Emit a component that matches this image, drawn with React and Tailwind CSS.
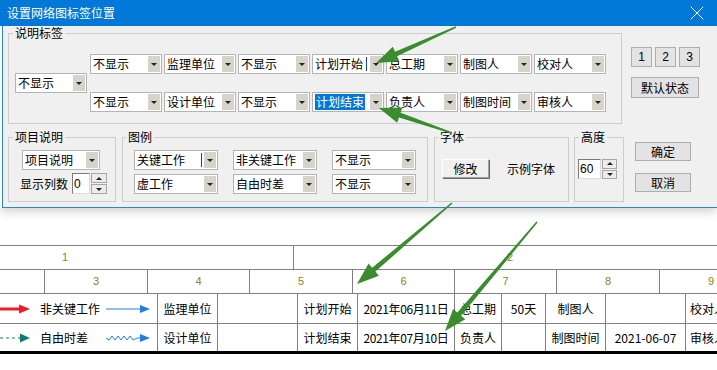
import { X } from "lucide-react";

function Tri({ up }) {
  return up ? (
    <div className="border-x-[3px] border-x-transparent border-b-[3px] border-b-[#222]" />
  ) : (
    <div className="border-x-[3px] border-x-transparent border-t-[3px] border-t-[#222]" />
  );
}

function Combo({ text, w, sel, caret }) {
  return (
    <div className={`${w} h-[20px] flex border border-[#b4b4b4] bg-white`}>
      <div className="flex-1 flex items-center pl-[2px] overflow-hidden whitespace-nowrap">
        {sel ? (
          <span className="bg-[#0078d7] text-white px-[1px] leading-[16px]">{text}</span>
        ) : (
          <span>{text}</span>
        )}
        {caret && <span className={`${caret} w-px h-[14px] bg-[#1d3f8f]`} />}
      </div>
      <div className="w-[12px] my-[1px] mr-[1px] bg-[#d6d3cb] flex items-center justify-center">
        <Tri />
      </div>
    </div>
  );
}

function Btn({ children, className }) {
  return (
    <div className={`${className} flex items-center justify-center bg-[#e3e3e3] border border-[#adadad]`}>
      {children}
    </div>
  );
}

function Spin({ w }) {
  return (
    <div className={`${w} h-full flex flex-col gap-px`}>
      <div className="flex-1 bg-[#ececec] border border-[#a6a6a6] flex items-center justify-center">
        <Tri up />
      </div>
      <div className="flex-1 bg-[#ececec] border border-[#a6a6a6] flex items-center justify-center">
        <Tri />
      </div>
    </div>
  );
}

function Edit({ w, text }) {
  return (
    <div
      className={`${w} h-full bg-white border border-[#7a7a7a] border-r-[#dcdcdc] border-b-[#dcdcdc] flex items-center pl-[1px] font-['Liberation_Sans',sans-serif] text-[12px]`}
    >
      {text}
    </div>
  );
}

function arrowPoints(tx, ty, px, py) {
  const dx = px - tx;
  const dy = py - ty;
  const len = Math.hypot(dx, dy);
  const ux = dx / len;
  const uy = dy / len;
  const nx = -uy;
  const ny = ux;
  const L = 22;
  const H = 8;
  const w0 = 1.5;
  const w1 = 5;
  const bx = px - ux * L;
  const by = py - uy * L;
  const pts = [
    [tx + (nx * w0) / 2, ty + (ny * w0) / 2],
    [bx + (nx * w1) / 2, by + (ny * w1) / 2],
    [bx + nx * H, by + ny * H],
    [px, py],
    [bx - nx * H, by - ny * H],
    [bx - (nx * w1) / 2, by - (ny * w1) / 2],
    [tx - (nx * w0) / 2, ty - (ny * w0) / 2],
  ];
  return pts.map((p) => p.map((v) => v.toFixed(1)).join(",")).join(" ");
}

const line = "border-[#808080]";

export default function App() {
  const row1 = ["不显示", "监理单位", "不显示", "计划开始", "总工期", "制图人", "校对人"];
  const row2 = ["不显示", "设计单位", "不显示", "计划结束", "负责人", "制图时间", "审核人"];

  return (
    <div className="relative w-[717px] h-[370px] overflow-hidden bg-white text-[12px] text-black font-['Noto_Sans_CJK_SC','Noto_Sans',sans-serif]">
      {/* dialog */}
      <div className="shadow-[0_3px_10px_rgba(0,0,0,0.2)]">
        <div className="h-[26px] bg-[#0078d7] text-white flex items-center pl-[7px]">
          <span className="flex-1">设置网络图标签位置</span>
          <X size={24} strokeWidth={1} className="mr-[8px]" />
        </div>
        <div className="ml-[2px] h-[182px] border-l border-b border-[#2a84d8] bg-[#f0f0f0]">
          <div className="flex">
            <fieldset className="ml-[5px] w-[614px] h-[98px] border border-[#cdcdcd]">
              <legend className="ml-[4px] px-[2px] leading-[14px]">说明标签</legend>
              <div className="flex items-center pt-[14px] pl-[6px]">
                <Combo w="w-[72px]" text="不显示" />
                <div className="ml-[3px] flex flex-col gap-[18px]">
                  <div className="flex gap-[2px]">
                    {row1.map((t, i) => (
                      <Combo key={i} w="w-[72px]" text={t} caret={i === 3 ? "ml-[3px]" : ""} />
                    ))}
                  </div>
                  <div className="flex gap-[2px]">
                    {row2.map((t, i) => (
                      <Combo key={i} w="w-[72px]" text={t} sel={i === 3} />
                    ))}
                  </div>
                </div>
              </div>
            </fieldset>
            <div className="ml-[9px] mt-[21px] flex flex-col">
              <div className="flex gap-[3px] font-['Liberation_Sans',sans-serif]">
                <Btn className="w-[21px] h-[20px]">1</Btn>
                <Btn className="w-[21px] h-[20px]">2</Btn>
                <Btn className="w-[21px] h-[20px]">3</Btn>
              </div>
              <Btn className="mt-[10px] w-[68px] h-[21px]">默认状态</Btn>
            </div>
          </div>

          <div className="mt-[6px] flex items-start">
            <fieldset className="ml-[5px] w-[108px] h-[72px] border border-[#cdcdcd]">
              <legend className="ml-[4px] px-[2px] leading-[14px]">项目说明</legend>
              <div className="pt-[6px] pl-[13px]">
                <Combo w="w-[78px]" text="项目说明" />
              </div>
              <div className="mt-[3px] pl-[11px] h-[21px] flex items-center">
                <span className="w-[48px]">显示列数</span>
                <div className="ml-[4px] h-full flex">
                  <Edit w="w-[18px]" text="0" />
                  <div className="ml-px h-full flex">
                    <Spin w="w-[16px]" />
                  </div>
                </div>
              </div>
            </fieldset>

            <fieldset className="ml-[6px] w-[306px] h-[72px] border border-[#cdcdcd]">
              <legend className="ml-[3px] px-[2px] leading-[14px]">图例</legend>
              <div className="pt-[6px] pl-[11px] grid grid-cols-[84px_84px_84px] gap-x-[15px] gap-y-[4px]">
                <Combo w="w-[84px]" text="关键工作" caret="ml-[16px]" />
                <Combo w="w-[84px]" text="非关键工作" />
                <Combo w="w-[84px]" text="不显示" />
                <Combo w="w-[84px]" text="虚工作" />
                <Combo w="w-[84px]" text="自由时差" />
                <Combo w="w-[84px]" text="不显示" />
              </div>
            </fieldset>

            <fieldset className="ml-[6px] w-[135px] h-[72px] border border-[#cdcdcd]">
              <legend className="ml-[3px] px-[2px] leading-[14px]">字体</legend>
              <div className="pt-[15px] pl-[7px] flex items-center">
                <div className="w-[47px] h-[19px] flex items-center justify-center bg-[#f0f0f0] border border-t-white border-l-white border-r-[#a0a0a0] border-b-[#a0a0a0] shadow-[1px_1px_0_#6a6a6a]">
                  修改
                </div>
                <span className="ml-[18px]">示例字体</span>
              </div>
            </fieldset>

            <fieldset className="ml-[5px] w-[50px] h-[72px] border border-[#cdcdcd]">
              <legend className="ml-[4px] px-[2px] leading-[14px]">高度</legend>
              <div className="mt-[15px] ml-[3px] h-[20px] flex">
                <Edit w="w-[23px]" text="60" />
                <div className="ml-px h-full flex">
                  <Spin w="w-[15px]" />
                </div>
              </div>
            </fieldset>

            <div className="ml-[11px] mt-[12px] flex flex-col">
              <Btn className="w-[56px] h-[19px]">确定</Btn>
              <Btn className="mt-[12px] w-[56px] h-[19px]">取消</Btn>
            </div>
          </div>
        </div>
      </div>

      {/* network table */}
      <div className="mt-[37px]">
        <div className={`flex h-[24px] border-t ${line} text-[#85852a] text-[11px] font-['Liberation_Sans',sans-serif]`}>
          <div className="w-[293px] shrink-0 pl-[62px] flex items-center">1</div>
          <div className={`flex-1 min-w-0 border-l ${line} pl-[213px] flex items-center`}>2</div>
        </div>
        <div className={`flex h-[24px] border-t ${line} text-[#85852a] text-[11px] font-['Liberation_Sans',sans-serif]`}>
          <div className="w-[44px] shrink-0" />
          <div className={`w-[103px] shrink-0 border-l ${line} flex items-center justify-center`}>3</div>
          <div className={`w-[102px] shrink-0 border-l ${line} flex items-center justify-center`}>4</div>
          <div className={`w-[103px] shrink-0 border-l ${line} flex items-center justify-center`}>5</div>
          <div className={`w-[102px] shrink-0 border-l ${line} flex items-center justify-center`}>6</div>
          <div className={`w-[102px] shrink-0 border-l ${line} flex items-center justify-center`}>7</div>
          <div className={`w-[103px] shrink-0 border-l ${line} flex items-center justify-center`}>8</div>
          <div className={`w-[103px] shrink-0 border-l ${line} flex items-center justify-center`}>9</div>
        </div>
        <div className={`flex h-[30px] border-t ${line}`}>
          <div className="w-[157px] shrink-0 flex items-center">
            <svg width="30" height="12">
              <line x1="0" y1="6" x2="21" y2="6" stroke="#ec1c24" strokeWidth="3" />
              <polygon points="19,1.5 30,6 19,10.5" fill="#ec1c24" />
            </svg>
            <span className="ml-[10px] w-[66px]">非关键工作</span>
            <svg width="44" height="12">
              <line x1="0" y1="6" x2="35" y2="6" stroke="#1f7fe0" strokeWidth="1" />
              <polygon points="34,2 44,6 34,10" fill="#1f7fe0" />
            </svg>
          </div>
          <div className={`w-[60px] shrink-0 border-l ${line} flex items-center justify-center`}>监理单位</div>
          <div className={`w-[80px] shrink-0 border-l ${line}`} />
          <div className={`w-[60px] shrink-0 border-l ${line} flex items-center justify-center`}>计划开始</div>
          <div className={`w-[97px] shrink-0 border-l ${line} flex items-center justify-center whitespace-nowrap tracking-[-0.4px]`}>2021年06月11日</div>
          <div className={`w-[47px] shrink-0 border-l ${line} flex items-center justify-center`}>总工期</div>
          <div className={`w-[44px] shrink-0 border-l ${line} flex items-center justify-center`}>50天</div>
          <div className={`w-[60px] shrink-0 border-l ${line} flex items-center justify-center`}>制图人</div>
          <div className={`w-[80px] shrink-0 border-l ${line}`} />
          <div className={`flex-1 min-w-0 border-l ${line} flex items-center pl-[4px] whitespace-nowrap overflow-hidden`}>校对人</div>
        </div>
        <div className={`flex h-[31px] border-t border-b-[3px] ${line} border-b-black`}>
          <div className="w-[157px] shrink-0 flex items-center">
            <svg width="30" height="12">
              <line x1="0" y1="6" x2="21" y2="6" stroke="#127a72" strokeWidth="1" strokeDasharray="3 3" />
              <polygon points="20,1.5 30,6 20,10.5" fill="#127a72" />
            </svg>
            <span className="ml-[10px] w-[66px]">自由时差</span>
            <svg width="44" height="12">
              <polyline
                points="0,6 3,8 6,4 9,8 12,4 15,8 18,4 21,8 24,4 27,8 31,6 36,6"
                fill="none"
                stroke="#1f7fe0"
                strokeWidth="1"
              />
              <polygon points="34,2 44,6 34,10" fill="#1f7fe0" />
            </svg>
          </div>
          <div className={`w-[60px] shrink-0 border-l ${line} flex items-center justify-center`}>设计单位</div>
          <div className={`w-[80px] shrink-0 border-l ${line}`} />
          <div className={`w-[60px] shrink-0 border-l ${line} flex items-center justify-center`}>计划结束</div>
          <div className={`w-[97px] shrink-0 border-l ${line} flex items-center justify-center whitespace-nowrap tracking-[-0.4px]`}>2021年07月10日</div>
          <div className={`w-[47px] shrink-0 border-l ${line} flex items-center justify-center`}>负责人</div>
          <div className={`w-[44px] shrink-0 border-l ${line}`} />
          <div className={`w-[60px] shrink-0 border-l ${line} flex items-center justify-center`}>制图时间</div>
          <div className={`w-[80px] shrink-0 border-l ${line} flex items-center justify-center`}>2021-06-07</div>
          <div className={`flex-1 min-w-0 border-l ${line} flex items-center pl-[4px] whitespace-nowrap overflow-hidden`}>审核人</div>
        </div>
      </div>

      {/* annotation arrows */}
      <svg className="absolute inset-0 pointer-events-none" width="717" height="370">
        <g fill="#3a8c2e">
          <polygon points={arrowPoints(456, 27, 376, 63)} />
          <polygon points={arrowPoints(452, 133, 379, 108)} />
          <polygon points={arrowPoints(452, 203, 357, 284)} />
          <polygon points={arrowPoints(537, 222, 445, 331)} />
        </g>
      </svg>
    </div>
  );
}
